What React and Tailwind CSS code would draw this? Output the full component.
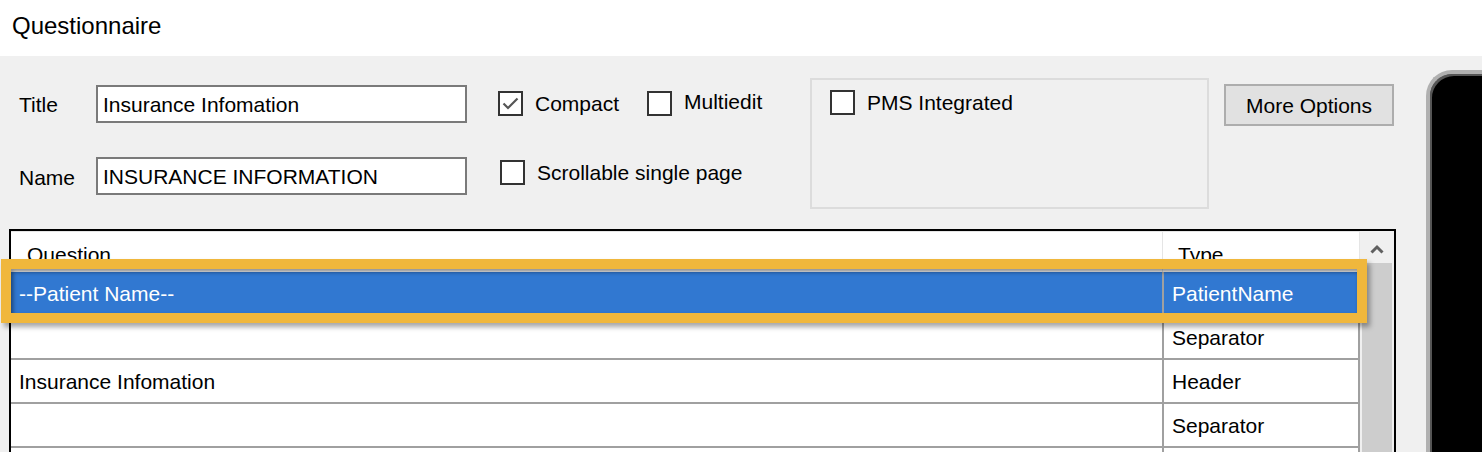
const rows = [
  { question: '--Patient Name--', type: 'PatientName', selected: true },
  { question: '', type: 'Separator' },
  { question: 'Insurance Infomation', type: 'Header' },
  { question: '', type: 'Separator' },
  { question: '', type: '' },
]

const Checkbox = ({ checked }) => (
  <div className="w-[25px] h-[25px] border-2 border-[#333333] bg-white flex items-center justify-center shrink-0">
    {checked && (
      <svg width="19" height="19" viewBox="0 0 19 19">
        <polyline points="2.5,9.5 7,14 16.5,4.5" fill="none" stroke="#555555" strokeWidth="2.2" />
      </svg>
    )}
  </div>
)

const App = () => {
  return (
    <div className="w-[1482px] h-[452px] overflow-hidden bg-[#f0f0f0] text-black text-[21px] leading-none font-['Liberation_Sans',Arial,sans-serif]">
      {/* window title */}
      <div className="h-[56px] bg-white flex items-center pl-[12px] pb-[4px] text-[24px]">Questionnaire</div>

      <div className="flex">
        <div className="w-[1426px] shrink-0">
          {/* form */}
          <div className="flex h-[173px] items-start">
            <div className="pl-[19px] pt-[29px] flex flex-col gap-[34px]">
              <div className="flex items-center">
                <span className="w-[77px]">Title</span>
                <div className="w-[371px] h-[38px] border-2 border-[#7a7a7a] bg-white flex items-center pl-[5px]">Insurance Infomation</div>
              </div>
              <div className="flex items-center">
                <span className="w-[77px] pt-[2px]">Name</span>
                <div className="w-[371px] h-[38px] border-2 border-[#7a7a7a] bg-white flex items-center pl-[5px]">INSURANCE INFORMATION</div>
              </div>
            </div>

            <div className="ml-[31px] w-[312px] pt-[35px] flex flex-col gap-[44px]">
              <div className="flex items-center">
                <Checkbox checked />
                <span className="ml-[12px]">Compact</span>
                <div className="ml-[28px]"><Checkbox /></div>
                <span className="ml-[12px] -mt-[4px]">Multiedit</span>
              </div>
              <div className="flex items-center pl-[2px]">
                <Checkbox />
                <span className="ml-[12px]">Scrollable single page</span>
              </div>
            </div>

            <div className="mt-[22px] w-[399px] h-[131px] border-2 border-[#dcdcdc] pl-[18px] pt-[10px]">
              <div className="flex items-center">
                <Checkbox />
                <span className="ml-[12px]">PMS Integrated</span>
              </div>
            </div>

            <button className="ml-[15px] mt-[28px] w-[170px] h-[42px] bg-[#e1e1e1] border-2 border-[#adadad] flex items-center justify-center">More Options</button>
          </div>

          {/* question grid */}
          <div className="ml-[9px] w-[1387px] border-2 border-black bg-white relative flex">
            <div className="w-[1349px]">
              <div className="flex h-[41px] border-t border-[#e5e5e5]">
                <div className="w-[1152px] pl-[16px] pt-[12px] border-r border-[#e5e5e5]">Question</div>
                <div className="flex-1 pl-[15px] pt-[12px] border-r border-[#e5e5e5]">Type</div>
              </div>
              {rows.map((row, id) => (
                <div
                  key={id}
                  className={row.selected
                    ? 'flex h-[44px] border-b-2 border-[#a0a0a0] bg-[#3178d1] text-white'
                    : 'flex h-[44px] border-b-2 border-[#a0a0a0]'}
                >
                  <div className="w-[1153px] pl-[8px] flex items-center border-r-2 border-[#a0a0a0]">{row.question}</div>
                  <div className="flex-1 pl-[8px] flex items-center border-r-2 border-[#a0a0a0]">{row.type}</div>
                </div>
              ))}
            </div>

            {/* scrollbar */}
            <div className="flex-1 bg-[#f0f0f0] flex flex-col items-center">
              <div className="h-[32px] w-full flex items-center justify-center pt-[4px]">
                <svg width="14" height="10" viewBox="0 0 14 10">
                  <polyline points="1.5,8.5 7,3 12.5,8.5" fill="none" stroke="#606060" strokeWidth="3" />
                </svg>
              </div>
              <div className="w-[30px] h-[300px] bg-[#cdcdcd]"></div>
            </div>

            {/* highlight frame over the selected row */}
            <div className="absolute left-[-10px] top-[28px] w-[1366px] h-[64px] border-[10px] border-[#f0b73c] shadow-[inset_2px_3px_4px_rgba(0,0,0,0.45),3px_4px_5px_rgba(0,0,0,0.35)] pointer-events-none"></div>
          </div>
        </div>

        {/* device preview edge */}
        <div className="flex-1 mt-[14px] h-[400px] bg-black rounded-tl-[26px] border-t-[4px] border-l-[4px] border-[#b0b0b0] shadow-[inset_2px_2px_0_#555555]"></div>
      </div>
    </div>
  )
}

export default App
